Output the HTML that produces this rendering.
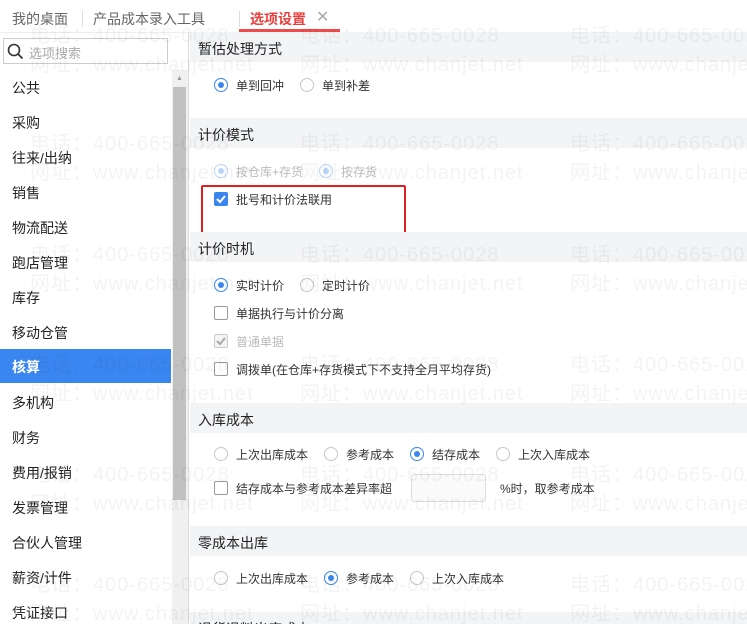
<!DOCTYPE html>
<html style="width:747px;height:624px;overflow:hidden"><head><meta charset="utf-8"><style>
*{margin:0;padding:0;box-sizing:border-box}
body{width:747px;height:624px;overflow:hidden;background:#fff;font-family:"Liberation Sans","Noto Sans CJK SC",sans-serif;font-size:13px;color:#333;position:relative}
.a{position:absolute;white-space:nowrap}
.tab{top:9px;font-size:14px;color:#666}
.nav{left:12px;font-size:14px;color:#222}
.hd{left:190px;width:557px;height:30px;background:#f3f4f6;font-size:14px;color:#222;padding:7px 0 0 8px}
.r{width:14px;height:14px;border:1px solid #c8c8c8;border-radius:50%;background:#fff}
.r.on{border-color:#3a86f0}
.r.on::after{content:"";position:absolute;left:3px;top:3px;width:6px;height:6px;border-radius:50%;background:#3a86f0}
.c{width:14px;height:14px;border:1px solid #999;border-radius:2px;background:#fff}
.ck{width:14px;height:14px;background:#3a86f0;border-radius:2px}
.lb{font-size:12px;color:#333}
.wm{font-size:20px;color:#000;opacity:.045;letter-spacing:1px}
</style></head><body>
<div class="a tab" style="left:12px">我的桌面</div>
<div class="a" style="left:82px;top:11px;width:1px;height:16px;background:#ddd"></div>
<div class="a tab" style="left:93px">产品成本录入工具</div>
<div class="a" style="left:239px;top:11px;width:1px;height:16px;background:#ddd"></div>
<div class="a tab" style="left:250px;color:#e8403c;font-weight:bold">选项设置</div>
<div class="a" style="left:316px;top:7px;font-size:16px;color:#aaa">✕</div>
<div class="a" style="left:239px;top:29px;width:101px;height:3px;background:#ee4b4b"></div>
<div class="a" style="left:0;top:32px;width:747px;height:1px;background:#eee"></div>

<div class="a" style="left:3px;top:38px;width:165px;height:26px;border:1px solid #ccc"></div>
<svg class="a" style="left:7px;top:43px" width="17" height="17" viewBox="0 0 17 17"><circle cx="7" cy="7" r="5.5" fill="none" stroke="#333" stroke-width="1.6"/><path d="M11 11l4.5 4.5" stroke="#333" stroke-width="1.8"/></svg>
<div class="a" style="left:29px;top:43px;font-size:13px;color:#aaa">选项搜索</div>

<div class="a nav" style="top:78px">公共</div>
<div class="a nav" style="top:113px">采购</div>
<div class="a nav" style="top:148px">往来/出纳</div>
<div class="a nav" style="top:183px">销售</div>
<div class="a nav" style="top:218px">物流配送</div>
<div class="a nav" style="top:253px">跑店管理</div>
<div class="a nav" style="top:288px">库存</div>
<div class="a nav" style="top:323px">移动仓管</div>
<div class="a" style="left:0;top:349px;width:171px;height:34px;background:#3a86f0"></div>
<div class="a nav" style="top:357px;color:#fff;font-weight:bold">核算</div>
<div class="a nav" style="top:393px">多机构</div>
<div class="a nav" style="top:428px">财务</div>
<div class="a nav" style="top:463px">费用/报销</div>
<div class="a nav" style="top:498px">发票管理</div>
<div class="a nav" style="top:533px">合伙人管理</div>
<div class="a nav" style="top:568px">薪资/计件</div>
<div class="a nav" style="top:603px">凭证接口</div>

<div class="a" style="left:172px;top:70px;width:16px;height:554px;background:#f0f0f0"></div>
<div class="a" style="left:176px;top:75px;font-size:7px;color:#999">▲</div>
<div class="a" style="left:173px;top:87px;width:13px;height:413px;background:#c1c1c1"></div>
<div class="a" style="left:188px;top:33px;width:1px;height:591px;background:#ddd"></div>

<div class="a hd" style="top:32px">暂估处理方式</div>
<div class="a r on" style="left:214px;top:78px"></div><div class="a lb" style="left:236px;top:77px">单到回冲</div>
<div class="a r" style="left:300px;top:78px"></div><div class="a lb" style="left:322px;top:77px">单到补差</div>

<div class="a hd" style="top:118px">计价模式</div>
<div class="a r on" style="left:214px;top:164px;opacity:.35"></div><div class="a lb" style="left:236px;top:163px;color:#bbb">按仓库+存货</div>
<div class="a r on" style="left:319px;top:164px;opacity:.35"></div><div class="a lb" style="left:341px;top:163px;color:#bbb">按存货</div>
<div class="a ck" style="left:214px;top:192px"></div><svg class="a" style="left:214px;top:192px" width="14" height="14"><path d="M3 7l3 3 5-6" fill="none" stroke="#fff" stroke-width="2"/></svg>
<div class="a lb" style="left:236px;top:191px">批号和计价法联用</div>
<div class="a" style="left:201px;top:185px;width:205px;height:52px;border:2px solid #e02020;border-radius:2px"></div>

<div class="a hd" style="top:232px">计价时机</div>
<div class="a r on" style="left:214px;top:278px"></div><div class="a lb" style="left:236px;top:277px">实时计价</div>
<div class="a r" style="left:300px;top:278px"></div><div class="a lb" style="left:322px;top:277px">定时计价</div>
<div class="a c" style="left:214px;top:306px"></div><div class="a lb" style="left:236px;top:305px">单据执行与计价分离</div>
<div class="a c" style="left:214px;top:334px;border-color:#ccc;background:#f4f4f4"></div><svg class="a" style="left:214px;top:334px" width="14" height="14"><path d="M3 7l3 3 5-6" fill="none" stroke="#aaa" stroke-width="2"/></svg>
<div class="a lb" style="left:236px;top:333px;color:#bbb">普通单据</div>
<div class="a c" style="left:214px;top:362px"></div><div class="a lb" style="left:236px;top:361px">调拨单(在仓库+存货模式下不支持全月平均存货)</div>

<div class="a hd" style="top:403px">入库成本</div>
<div class="a r" style="left:214px;top:447px"></div><div class="a lb" style="left:236px;top:446px">上次出库成本</div>
<div class="a r" style="left:324px;top:447px"></div><div class="a lb" style="left:346px;top:446px">参考成本</div>
<div class="a r on" style="left:410px;top:447px"></div><div class="a lb" style="left:432px;top:446px">结存成本</div>
<div class="a r" style="left:496px;top:447px"></div><div class="a lb" style="left:518px;top:446px">上次入库成本</div>
<div class="a c" style="left:214px;top:481px"></div><div class="a lb" style="left:236px;top:480px">结存成本与参考成本差异率超</div>
<div class="a" style="left:411px;top:474px;width:75px;height:28px;border:1px solid #ddd;border-radius:3px;background:#fafafa"></div>
<div class="a lb" style="left:500px;top:480px">%时，取参考成本</div>

<div class="a hd" style="top:526px">零成本出库</div>
<div class="a r" style="left:214px;top:571px"></div><div class="a lb" style="left:236px;top:570px">上次出库成本</div>
<div class="a r on" style="left:324px;top:571px"></div><div class="a lb" style="left:346px;top:570px">参考成本</div>
<div class="a r" style="left:410px;top:571px"></div><div class="a lb" style="left:432px;top:570px">上次入库成本</div>
<div class="a hd" style="top:612px;height:12px;overflow:hidden">退货退料出库成本</div>

<div class="a wm" style="left:30px;top:19px">电话：400-665-0028</div>
<div class="a wm" style="left:300px;top:19px">电话：400-665-0028</div>
<div class="a wm" style="left:570px;top:19px">电话：400-665-0028</div>
<div class="a wm" style="left:30px;top:48px">网址：www.chanjet.net</div>
<div class="a wm" style="left:300px;top:48px">网址：www.chanjet.net</div>
<div class="a wm" style="left:570px;top:48px">网址：www.chanjet.net</div>
<div class="a wm" style="left:30px;top:127px">电话：400-665-0028</div>
<div class="a wm" style="left:300px;top:127px">电话：400-665-0028</div>
<div class="a wm" style="left:570px;top:127px">电话：400-665-0028</div>
<div class="a wm" style="left:30px;top:156px">网址：www.chanjet.net</div>
<div class="a wm" style="left:300px;top:156px">网址：www.chanjet.net</div>
<div class="a wm" style="left:570px;top:156px">网址：www.chanjet.net</div>
<div class="a wm" style="left:30px;top:238px">电话：400-665-0028</div>
<div class="a wm" style="left:300px;top:238px">电话：400-665-0028</div>
<div class="a wm" style="left:570px;top:238px">电话：400-665-0028</div>
<div class="a wm" style="left:30px;top:267px">网址：www.chanjet.net</div>
<div class="a wm" style="left:300px;top:267px">网址：www.chanjet.net</div>
<div class="a wm" style="left:570px;top:267px">网址：www.chanjet.net</div>
<div class="a wm" style="left:30px;top:348px">电话：400-665-0028</div>
<div class="a wm" style="left:300px;top:348px">电话：400-665-0028</div>
<div class="a wm" style="left:570px;top:348px">电话：400-665-0028</div>
<div class="a wm" style="left:30px;top:377px">网址：www.chanjet.net</div>
<div class="a wm" style="left:300px;top:377px">网址：www.chanjet.net</div>
<div class="a wm" style="left:570px;top:377px">网址：www.chanjet.net</div>
<div class="a wm" style="left:30px;top:458px">电话：400-665-0028</div>
<div class="a wm" style="left:300px;top:458px">电话：400-665-0028</div>
<div class="a wm" style="left:570px;top:458px">电话：400-665-0028</div>
<div class="a wm" style="left:30px;top:487px">网址：www.chanjet.net</div>
<div class="a wm" style="left:300px;top:487px">网址：www.chanjet.net</div>
<div class="a wm" style="left:570px;top:487px">网址：www.chanjet.net</div>
<div class="a wm" style="left:30px;top:568px">电话：400-665-0028</div>
<div class="a wm" style="left:300px;top:568px">电话：400-665-0028</div>
<div class="a wm" style="left:570px;top:568px">电话：400-665-0028</div>
<div class="a wm" style="left:30px;top:597px">网址：www.chanjet.net</div>
<div class="a wm" style="left:300px;top:597px">网址：www.chanjet.net</div>
<div class="a wm" style="left:570px;top:597px">网址：www.chanjet.net</div>
</body></html>
